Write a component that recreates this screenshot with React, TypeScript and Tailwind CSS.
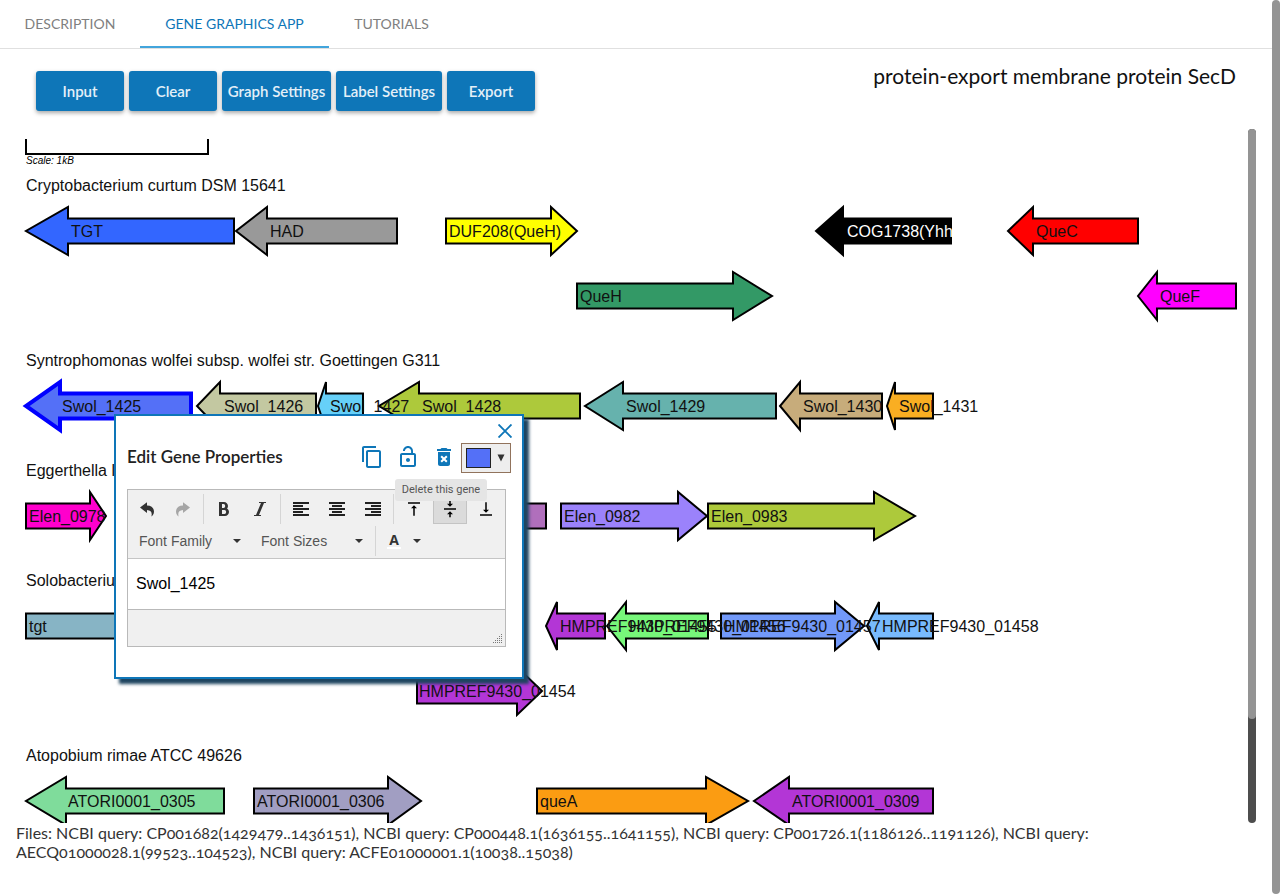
import React from 'react';
import {
  MdContentCopy,
  MdDeleteForever,
  MdLockOpen,
  MdVerticalAlignBottom,
  MdVerticalAlignCenter,
  MdVerticalAlignTop,
} from 'react-icons/md';
import { ImBold, ImItalic, ImParagraphCenter, ImParagraphLeft, ImParagraphRight } from 'react-icons/im';

type Gene = {
  start: number;
  head: number;
  end: number;
  y: number;
  fill: string;
  label: string;
  labelX: number;
  labelFill?: string;
  selected?: boolean;
};

// `start` is the tail of the arrow and `end` its tip, so a gene on the reverse strand runs right to left.
const genes: Gene[] = [
  { start: 234, head: 68, end: 26, y: 231, fill: '#3366ff', label: 'TGT', labelX: 71 },
  { start: 397, head: 267, end: 236, y: 231, fill: '#999999', label: 'HAD', labelX: 270 },
  { start: 446, head: 551, end: 577, y: 231, fill: '#ffff00', label: 'DUF208(QueH)', labelX: 449 },
  { start: 951, head: 843, end: 816, y: 231, fill: '#000000', label: 'COG1738(YhhQ)', labelX: 847, labelFill: '#ffffff' },
  { start: 1138, head: 1033, end: 1008, y: 231, fill: '#ff0000', label: 'QueC', labelX: 1036 },
  { start: 577, head: 733, end: 772, y: 296, fill: '#339966', label: 'QueH', labelX: 580 },
  { start: 1236, head: 1157, end: 1138, y: 296, fill: '#ff00ff', label: 'QueF', labelX: 1160 },
  { start: 316, head: 220, end: 197, y: 406, fill: '#c3c8a1', label: 'Swol_1426', labelX: 224 },
  { start: 363, head: 326, end: 318, y: 406, fill: '#66d0f8', label: 'Swol_1427', labelX: 330 },
  { start: 580, head: 419, end: 379, y: 406, fill: '#adc93b', label: 'Swol_1428', labelX: 422 },
  { start: 776, head: 623, end: 585, y: 406, fill: '#66b2ad', label: 'Swol_1429', labelX: 626 },
  { start: 882, head: 800, end: 780, y: 406, fill: '#c7ac7b', label: 'Swol_1430', labelX: 803 },
  { start: 933, head: 895, end: 887, y: 406, fill: '#f9ae22', label: 'Swol_1431', labelX: 899 },
  { start: 191, head: 60, end: 26, y: 406, fill: '#5470f7', label: 'Swol_1425', labelX: 62, selected: true },
  { start: 26, head: 90, end: 106, y: 516, fill: '#ff00cc', label: 'Elen_0978', labelX: 29 },
  { start: 546, head: 440, end: 400, y: 516, fill: '#b06fbc', label: '', labelX: 440 },
  { start: 561, head: 678, end: 707, y: 516, fill: '#9b82fb', label: 'Elen_0982', labelX: 564 },
  { start: 708, head: 874, end: 915, y: 516, fill: '#adc93b', label: 'Elen_0983', labelX: 711 },
  { start: 26, head: 230, end: 270, y: 626, fill: '#87b4c5', label: 'tgt', labelX: 29 },
  { start: 605, head: 557, end: 546, y: 626, fill: '#b336d6', label: 'HMPREF9430_01455', labelX: 560 },
  { start: 708, head: 626, end: 607, y: 626, fill: '#77f77a', label: 'HMPREF9430_01456', labelX: 629 },
  { start: 721, head: 835, end: 864, y: 626, fill: '#7299f9', label: 'HMPREF9430_01457', labelX: 724 },
  { start: 933, head: 879, end: 867, y: 626, fill: '#78bafd', label: 'HMPREF9430_01458', labelX: 882 },
  { start: 417, head: 517, end: 542, y: 691, fill: '#b336d6', label: 'HMPREF9430_01454', labelX: 419 },
  { start: 224, head: 66, end: 26, y: 801, fill: '#7fdc9b', label: 'ATORI0001_0305', labelX: 68 },
  { start: 254, head: 388, end: 421, y: 801, fill: '#a19ec2', label: 'ATORI0001_0306', labelX: 257 },
  { start: 537, head: 706, end: 748, y: 801, fill: '#fb9c12', label: 'queA', labelX: 540 },
  { start: 933, head: 789, end: 754, y: 801, fill: '#b336d6', label: 'ATORI0001_0309', labelX: 792 },
];

const organisms = [
  { name: 'Cryptobacterium curtum DSM 15641', y: 191 },
  { name: 'Syntrophomonas wolfei subsp. wolfei str. Goettingen G311', y: 366 },
  { name: 'Eggerthella lenta DSM 2243', y: 476 },
  { name: 'Solobacterium moorei F0204', y: 586 },
  { name: 'Atopobium rimae ATCC 49626', y: 761 },
];

function arrowPoints({ start, head, end, y }: Gene) {
  return [
    [start, y - 12.5],
    [head, y - 12.5],
    [head, y - 24],
    [end, y],
    [head, y + 24],
    [head, y + 12.5],
    [start, y + 12.5],
  ]
    .map((p) => p.join(','))
    .join(' ');
}

function GeneChart() {
  return (
    <svg
      className="block h-[684px] w-[1224px] shrink-0 font-['Liberation_Sans',sans-serif] text-[16px]"
      viewBox="16 139 1224 684"
      role="img"
      aria-label="Gene neighbourhoods"
    >
      <path d="M26 130V154H208V130" fill="none" stroke="#000" strokeWidth="2" />
      <text x="26" y="164" className="text-[10px] italic">
        Scale: 1kB
      </text>
      {organisms.map((o) => (
        <text key={o.name} x="26" y={o.y} fill="#111">
          {o.name}
        </text>
      ))}
      {genes.map((g) => (
        <polygon
          key={`${g.start}-${g.y}`}
          points={arrowPoints(g)}
          fill={g.fill}
          stroke={g.selected ? '#0000ff' : '#000'}
          strokeWidth={g.selected ? 4 : 2}
        />
      ))}
      {genes.map((g) => (
        <text key={`${g.start}-${g.y}`} x={g.labelX} y={g.y + 6} fill={g.labelFill ?? '#111'}>
          {g.label}
        </text>
      ))}
    </svg>
  );
}

function Tab({ children, className, active }: { children: string; className: string; active?: boolean }) {
  return (
    <a
      href="#"
      aria-current={active ? 'page' : undefined}
      className={`${className} flex h-12 items-center justify-center border-b-2 text-[14px] whitespace-nowrap ${
        active ? 'border-[#42a5dc] text-[#0e76b8]' : 'border-transparent text-[#808080]'
      }`}
    >
      {children}
    </a>
  );
}

function ActionButton({ children, className }: { children: string; className: string }) {
  return (
    <button
      type="button"
      className={`${className} h-10 rounded-[3px] bg-[#0e76b8] text-[15px] font-semibold whitespace-nowrap text-[#e4f0f8] shadow-[0_2px_4px_rgba(0,0,0,0.35)]`}
    >
      {children}
    </button>
  );
}

function ToolButton({ label, active, children }: { label: string; active?: boolean; children: React.ReactNode }) {
  return (
    <button
      type="button"
      aria-label={label}
      className={`flex h-[30px] w-[34px] items-center justify-center border ${
        active ? 'border-[#c4c4c4] bg-[#dbdbdb]' : 'border-transparent'
      }`}
    >
      {children}
    </button>
  );
}

function ToolGroup({ children, first }: { children: React.ReactNode; first?: boolean }) {
  return <div className={`flex gap-[2px] ${first ? '' : 'ml-[3px] border-l border-[#d5d5d5] pl-[3px]'}`}>{children}</div>;
}

function Caret() {
  return (
    <svg width="8" height="4" viewBox="0 0 8 4" aria-hidden="true">
      <path d="M0 0H8L4 4Z" fill="#333" />
    </svg>
  );
}

function ToolSelect({ label }: { label: string }) {
  return (
    <div className="relative h-[30px] w-[120px]">
      <select
        aria-label={label}
        className="h-full w-full appearance-none bg-transparent pl-[9px] font-['Liberation_Sans',sans-serif] text-[14px] text-[#555]"
      >
        <option>{label}</option>
      </select>
      <span className="pointer-events-none absolute top-[13px] right-[9px] flex">
        <Caret />
      </span>
    </div>
  );
}

function CurvedArrow({ className }: { className: string }) {
  return (
    <svg className={className} width="16" height="16" viewBox="0 0 16 16" aria-hidden="true">
      <path
        d="M1 6.5L8 1.3V4.5C12.6 4.6 15 7.2 15 10.6C15 13 13.8 14.7 12.3 15.6C13.4 12 12.4 9.2 8 9V12Z"
        fill="currentColor"
      />
    </svg>
  );
}

const gripDots = [
  [9, 0],
  [7, 2], [9, 2],
  [5, 4], [7, 4], [9, 4],
  [3, 6], [5, 6], [7, 6], [9, 6],
  [1, 8], [3, 8], [5, 8], [7, 8], [9, 8],
];

function Editor() {
  return (
    <div className="mt-4 mr-[5px] border border-[#b9b9b9]">
      <div className="flex flex-col gap-[2px] border-b border-[#c5c5c5] bg-[#f0f0f0] px-[2px] pt-1 pb-[2px]">
        <div className="flex">
          <ToolGroup first>
            <ToolButton label="Undo">
              <CurvedArrow className="text-[#333]" />
            </ToolButton>
            <ToolButton label="Redo">
              <CurvedArrow className="-scale-x-100 text-[#a6a6a6]" />
            </ToolButton>
          </ToolGroup>
          <ToolGroup>
            <ToolButton label="Bold">
              <ImBold size={16} color="#333" />
            </ToolButton>
            <ToolButton label="Italic">
              <ImItalic size={16} color="#333" />
            </ToolButton>
          </ToolGroup>
          <ToolGroup>
            <ToolButton label="Align left">
              <ImParagraphLeft size={16} color="#222" />
            </ToolButton>
            <ToolButton label="Align center">
              <ImParagraphCenter size={16} color="#222" />
            </ToolButton>
            <ToolButton label="Align right">
              <ImParagraphRight size={16} color="#222" />
            </ToolButton>
          </ToolGroup>
          <ToolGroup>
            <ToolButton label="Align top">
              <MdVerticalAlignTop size={18} color="#000" />
            </ToolButton>
            <ToolButton label="Align middle" active>
              <MdVerticalAlignCenter size={18} color="#000" />
            </ToolButton>
            <ToolButton label="Align bottom">
              <MdVerticalAlignBottom size={18} color="#000" />
            </ToolButton>
          </ToolGroup>
        </div>
        <div className="flex">
          <ToolGroup first>
            <ToolSelect label="Font Family" />
            <ToolSelect label="Font Sizes" />
          </ToolGroup>
          <ToolGroup>
            <button type="button" aria-label="Text color" className="flex h-[30px] items-center gap-3 pl-2">
              <span className="flex h-4 w-[14px] flex-col items-center justify-between border-b-2 border-white font-['Open_Sans',sans-serif] text-[14px] leading-[14px] font-bold text-[#333]">
                A
              </span>
              <Caret />
            </button>
          </ToolGroup>
        </div>
      </div>
      <input
        aria-label="Gene label"
        defaultValue="Swol_1425"
        className="block h-[50px] w-full bg-white px-2 font-['Liberation_Sans',sans-serif] text-[16px] text-black"
      />
      <div className="flex h-[37px] items-end justify-end border-t border-[#b9b9b9] bg-[#f0f0f0] p-[3px]">
        <svg width="10" height="9" viewBox="0 0 10 9" aria-hidden="true">
          {gripDots.map(([x, y]) => (
            <rect key={`${x}-${y}`} x={x} y={y} width="1" height="1" fill="#777" />
          ))}
        </svg>
      </div>
    </div>
  );
}

function GeneDialog() {
  return (
    <section
      role="dialog"
      aria-labelledby="dialog-title"
      className="absolute top-[414px] left-[114px] w-[410px] border-2 border-[#0e76b8] bg-white px-[11px] pt-2 pb-[30px] shadow-[5px_5px_3px_#1f4560]"
    >
      <div className="-mr-px flex h-[19px] justify-end">
        <button type="button" aria-label="Close" className="h-[14px] text-[#0e76b8]">
          <svg width="14" height="14" viewBox="0 0 14 14" aria-hidden="true">
            <path d="M0.5 0.5L13.5 13.5M13.5 0.5L0.5 13.5" stroke="currentColor" strokeWidth="1.9" />
          </svg>
        </button>
      </div>
      <header className="flex h-[30px] items-center">
        <h2 id="dialog-title" className="grow pb-[2px] text-[17px] font-semibold text-[#222]">
          Edit Gene Properties
        </h2>
        <div className="flex items-center gap-3 pb-[2px] text-[#0e76b8]">
          <button type="button" aria-label="Copy gene">
            <MdContentCopy size={24} />
          </button>
          <button type="button" aria-label="Unlock gene">
            <MdLockOpen size={24} />
          </button>
          <div className="relative flex">
            <button type="button" aria-label="Delete gene" aria-describedby="delete-tip">
              <MdDeleteForever size={24} />
            </button>
            <span
              id="delete-tip"
              role="tooltip"
              className="absolute top-[34px] -left-[37px] z-10 flex h-[22px] w-[92px] items-center justify-center rounded-[3px] bg-[#e5e5e5] font-['Roboto',sans-serif] text-[11px] whitespace-nowrap text-[#555]"
            >
              Delete this gene
            </span>
          </div>
        </div>
        <button
          type="button"
          aria-label="Gene color"
          className="ml-[5px] flex h-[30px] w-[50px] items-center gap-[6px] border border-[#91735c] bg-[#eeeeee] pl-1"
        >
          <span className="h-5 w-[25px] border border-[#222] bg-[#5470f7]" />
          <svg width="8" height="8" viewBox="0 0 8 8" aria-hidden="true">
            <path d="M0.5 0.5H7.5L4 7.5Z" fill="#333" />
          </svg>
        </button>
      </header>
      <Editor />
    </section>
  );
}

export default function App() {
  return (
    <div className="relative flex min-h-screen bg-white font-['Lato',sans-serif] text-black">
      <div className="flex min-w-0 grow flex-col">
        <nav className="flex border-b border-[#e0e0e0]">
          <Tab className="w-[140px]">DESCRIPTION</Tab>
          <Tab className="w-[189px]" active>
            GENE GRAPHICS APP
          </Tab>
          <Tab className="w-[125px]">TUTORIALS</Tab>
        </nav>
        <main className="flex flex-col px-4 pt-[22px]">
          <div className="flex h-[58px] items-start justify-between pr-5 pl-5">
            <div className="flex gap-[5px]">
              <ActionButton className="w-[88px]">Input</ActionButton>
              <ActionButton className="w-[88px]">Clear</ActionButton>
              <ActionButton className="w-[109px]">Graph Settings</ActionButton>
              <ActionButton className="w-[106px]">Label Settings</ActionButton>
              <ActionButton className="w-[88px]">Export</ActionButton>
            </div>
            <h1 className="text-[21px] leading-[10px] text-[#111]">protein-export membrane protein SecD</h1>
          </div>
          <div className="flex h-[694px] justify-between">
            <div className="min-w-0 grow overflow-hidden pt-[10px]">
              <GeneChart />
            </div>
            <div className="w-2 shrink-0 rounded bg-[#4d4d4d]">
              <div className="h-[590px] rounded bg-[#949494]" />
            </div>
          </div>
          <p className="max-w-[1100px] text-[16px] leading-[19px] text-[#333] [font-variant-numeric:oldstyle-nums]">
            Files: NCBI query: CP001682(1429479..1436151), NCBI query: CP000448.1(1636155..1641155), NCBI query:
            CP001726.1(1186126..1191126), NCBI query: AECQ01000028.1(99523..104523), NCBI query:
            ACFE01000001.1(10038..15038)
          </p>
        </main>
      </div>
      <div className="w-2 shrink-0 rounded bg-[#949494]" />
      <GeneDialog />
    </div>
  );
}
